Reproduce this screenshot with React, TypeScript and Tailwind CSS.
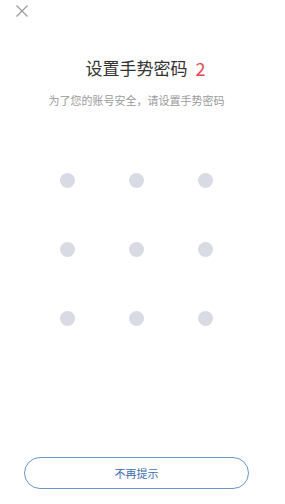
import React from "react";

export default function App() {
  const dots = Array.from({ length: 9 });
  return (
    <div
      className="w-[285px] h-[504px] bg-white overflow-hidden"
      style={{ fontFamily: '"Noto Sans CJK SC", "Noto Sans", sans-serif' }}
    >
      <div className="w-[273px] h-full flex flex-col items-center">
        <div className="w-full h-[22px] flex items-center pl-[16px]">
          <svg width="12" height="12" viewBox="0 0 12 12">
            <path d="M0.5 0.5 L11.5 11.5 M11.5 0.5 L0.5 11.5" stroke="#9a9a9a" strokeWidth="1.2" fill="none" />
          </svg>
        </div>
        <div className="mt-[34px] h-[24px] relative text-[17px] leading-[24px] text-[#333333]">
          设置手势密码
          <span className="absolute left-[calc(100%+8px)] top-0 text-[18px] leading-[24px] text-[#e4474f]">2</span>
        </div>
        <div className="mt-[12px] h-[16px] text-[11px] leading-[16px] text-[#9a9a9a]">
          为了您的账号安全，请设置手势密码
        </div>
        <div className="mt-[65px] grid grid-cols-3 gap-x-[54px] gap-y-[54px]">
          {dots.map((_, i) => (
            <div key={i} className="w-[15px] h-[15px] rounded-full bg-[#d9dbe4]" />
          ))}
        </div>
        <button className="mt-[131px] w-[225px] h-[32px] rounded-full border border-[#6a97c9] text-[11px] text-[#3b6cb3] flex items-center justify-center">
          不再提示
        </button>
      </div>
    </div>
  );
}
